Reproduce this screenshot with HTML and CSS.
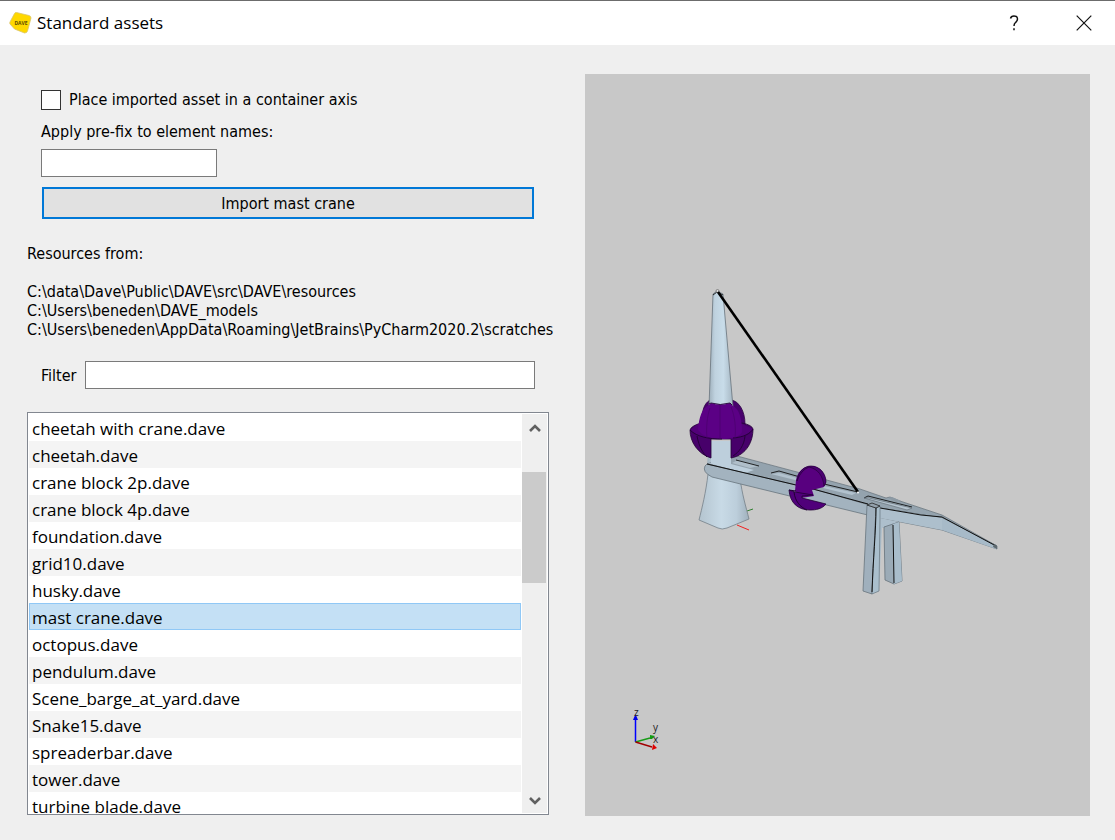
FILE: index.html
```html
<!DOCTYPE html>
<html lang="en">
<head>
<meta charset="utf-8">
<meta name="viewport" content="width=device-width, initial-scale=1">
<title>Standard assets</title>
<link rel="stylesheet" href="styles.css">
</head>
<body>
<div class="dialog">
  <header class="titlebar">
    <svg class="logo" viewBox="0 0 24 24" aria-hidden="true">
      <path d="M7.500 1.500 L20 4.500 Q22 5 22 7 L18.500 20 Q18 22 15.500 22 L5.500 18 L1 13 Q.5 12 1 11 L5.500 2.500 Q6 1.300 7.500 1.500Z" fill="#ffd800" stroke="#d9c46a" stroke-width=".8"/>
      <text x="12" y="13.500" class="logo-text">DAVE</text>
    </svg>
    <h1 class="title">Standard assets</h1>
    <button class="window-button" type="button" aria-label="Help">
      <svg class="window-icon" viewBox="0 0 16 16" aria-hidden="true"><path d="M4.500 3.500Q5 1 8 1Q11.500 1 11.500 4Q11.500 6 9.500 7.500Q8 8.700 8 11M8 13.300V15.300" fill="none" stroke="#111" stroke-width="1.500"/></svg>
    </button>
    <button class="window-button" type="button" aria-label="Close">
      <svg class="window-icon" viewBox="0 0 16 16" aria-hidden="true"><path d="M.7.7 15.300 15.300M15.300.7.7 15.300" stroke="#111" stroke-width="1.200"/></svg>
    </button>
  </header>
  <main class="content">
    <section class="controls">
      <form class="import-form">
        <label class="check-row"><input class="checkbox" type="checkbox">Place imported asset in a container axis</label>
        <label class="prefix-label" for="prefix">Apply pre-fix to element names:</label>
        <input class="field prefix" id="prefix" type="text">
        <button class="import-button" type="button">Import mast crane</button>
      </form>
      <div class="resources">
        <p class="resources-title">Resources from:</p>
        <p class="path">C:\data\Dave\Public\DAVE\src\DAVE\resources</p>
        <p class="path">C:\Users\beneden\DAVE_models</p>
        <p class="path">C:\Users\beneden\AppData\Roaming\JetBrains\PyCharm2020.2\scratches</p>
      </div>
      <div class="filter-row">
        <label for="filter">Filter</label>
        <input class="field filter" id="filter" type="text">
      </div>
      <div class="list-box">
        <ul class="list">
          <li class="item">cheetah with crane.dave</li>
          <li class="item">cheetah.dave</li>
          <li class="item">crane block 2p.dave</li>
          <li class="item">crane block 4p.dave</li>
          <li class="item">foundation.dave</li>
          <li class="item">grid10.dave</li>
          <li class="item">husky.dave</li>
          <li class="item selected">mast crane.dave</li>
          <li class="item">octopus.dave</li>
          <li class="item">pendulum.dave</li>
          <li class="item">Scene_barge_at_yard.dave</li>
          <li class="item">Snake15.dave</li>
          <li class="item">spreaderbar.dave</li>
          <li class="item">tower.dave</li>
          <li class="item">turbine blade.dave</li>
        </ul>
        <div class="scrollbar">
          <button class="scroll-button" type="button" aria-label="Scroll up"><svg class="chevron" viewBox="0 0 12 10" aria-hidden="true"><path d="M1 8 6 3 11 8" fill="none" stroke="#606060" stroke-width="2.600"/></svg></button>
          <div class="track"><div class="thumb"></div></div>
          <button class="scroll-button scroll-down" type="button" aria-label="Scroll down"><svg class="chevron" viewBox="0 0 12 10" aria-hidden="true"><path d="M1 2 6 7 11 2" fill="none" stroke="#606060" stroke-width="2.600"/></svg></button>
        </div>
      </div>
    </section>
    <section class="viewport" aria-label="Asset preview">
      <svg class="scene" viewBox="585 74 505 742" role="img" aria-label="Mast crane">
        <defs>
          <linearGradient id="mast" x1="0" x2="1" y1="0" y2="0">
            <stop offset="0" stop-color="#9fb0bc"/><stop offset=".25" stop-color="#bfd2df"/><stop offset=".6" stop-color="#c8dce9"/><stop offset="1" stop-color="#a5b6c2"/>
          </linearGradient>
          <linearGradient id="base" x1="0" x2="1" y1="0" y2="0">
            <stop offset="0" stop-color="#b4c4cf"/><stop offset=".45" stop-color="#c8dae6"/><stop offset=".75" stop-color="#bccedb"/><stop offset="1" stop-color="#a0b0bc"/>
          </linearGradient>
        </defs>
        <!-- mast base and ground axes -->
        <path d="M747 511 753 509" stroke="#308030"/>
        <path d="M737 525 749 530" stroke="#f02020"/>
        <path d="M708 474 C706 492 702 508 699 520 L718 528 Q722 530 727 528 L749 519 C746 507 742 494 740 478Z" fill="url(#base)" stroke="#758089" stroke-width=".8"/>
        <path d="M708 450H732L735 467H707Z" fill="url(#mast)"/>
        <!-- boom top face -->
        <path d="M707 464 L732 456 L737 456 L797 472 L860 489 L886 498 L890 497 L900 501 L942 515 L997 546 L942 518 L880 508 L813 490Z" fill="#94a3ae" stroke="#65717a" stroke-width=".7"/>
        <path d="M708 463H711V441H731V464L754 470 745 473Z" fill="#bdcfdc"/>
        <path d="M732 463 750 468 759 466 738 460Z" fill="#b0bfca"/>
        <path d="M736 460 759 466M771 473 779 471 800 477M824 484 858 492M864 498 868 496 912 507" stroke="#111" stroke-width=".9" fill="none"/>
        <path d="M771 474 779 473 801 479 799 481Z" fill="#b2c2ce"/>
        <path d="M824 486 856 493 852 495 823 488Z" fill="#b2c2ce"/>
        <path d="M864 498 869 498 912 508 907 510Z" fill="#b5c4cf" stroke="#68747d" stroke-width=".7"/>
        <path d="M888 498 892 497 901 501 896 502Z" fill="#8d9aa4"/>
        <!-- large purple sphere, rear -->
        <path d="M702 424 C702 409 704 404 710 400L713 409 704 427Z M731 400 C739 401 745 411 745 424L737 427 731 407Z" fill="#48006d" stroke="#2b0042" stroke-width=".8"/>
        <!-- mast -->
        <path d="M713 294 717 291 723 294 733 407H709Z" fill="url(#mast)" stroke="#68747c" stroke-width=".8"/>
        <path d="M713 295 717 292 723 295" fill="none" stroke="#222"/>
        <circle cx="717.500" cy="291" r="1.500" fill="#ddd" stroke="#666" stroke-width=".7"/>
        <!-- large purple sphere, front -->
        <path d="M690 430 Q691 426 701 423L742 423Q752 425 753 429C753 441 747 455 731 458V439H711V458C698 454 690 442 690 430Z" fill="#47006a" stroke="#210034" stroke-width=".8"/>
        <path d="M690 430C697 437 709 439 722 439S746 437 753 429L742 424H698Z" fill="#520079"/>
        <path d="M698 430 C699 417 702 408 709 405L711 403 Q720 406 730 403L733 406C739 409 742 418 742 432 C740 437 730 439 718 439 Q704 438 698 430Z" fill="#5b0085"/>
        <path d="M709 404 711 403Q720 406 730 403L732 405M697 436C699 447 703 453 707 457M745 436C744 446 739 452 733 456M690 430C697 437 709 439 722 439M733 438C744 437 750 434 753 429" fill="none" stroke="#210034" stroke-width=".9"/>
        <path d="M720 405V439M710 408C707 416 706 429 707 438M731 407C735 416 736 428 735 438" fill="none" stroke="#49006c" stroke-width=".7"/>
        <!-- boom front face -->
        <path d="M707 464 813 489 880 508 942 518 997 546V549L942 530 880 518 802 499 712 477 Q702 472 705 466Z" fill="#a3b3bf" stroke="#68757e" stroke-width=".8"/>
        <path d="M880 508 942 518V530L880 518Z" fill="#adbfcc"/>
        <path d="M942 518 996 546V549L942 530Z" fill="#a7bac8"/>
        <path d="M707 464 813 489 868 504M880 508 921 515 942 517 996 546" fill="none" stroke="#111" stroke-width="1"/>
        <path d="M994 544 997 546V549L993 547Z" fill="#5e696f"/>
        <!-- small purple sphere -->
        <path d="M796 480C798 470 805 466 811 466C821 466 826 474 826 483L824 487 812 490 814 496 801 498 795 491Z" fill="#58007f"/>
        <path d="M797 481C798 471 805 466 811 466C820 466 826 474 826 482L824 486C823 476 818 469 809 467Q801 470 797 481Z" fill="#4b0071" stroke="#25003a" stroke-width=".7"/>
        <path d="M789 490 795 492 813 495 802 496 802 498 826 504C822 509 816 510 810 510C798 510 790 503 789 490Z" fill="#50007a" stroke="#210034" stroke-width=".8"/>
        <path d="M794 492C795 501 800 507 807 510M789 490 796 491" stroke="#210034" fill="none"/>
        <!-- legs -->
        <path d="M880 518 899 522 898 525 882 528 879 591 872 594Z" fill="#adbfcc"/>
        <path d="M884 527 893 524 899 522 902 581 894 584 885 580Z" fill="#9babb7" stroke="#66727b" stroke-width=".8"/>
        <path d="M893 524 899 522 902 581 894 584Z" fill="#a9bdcb"/>
        <path d="M867 505 876 508 872 594 863 591Z" fill="#a0b0bd" stroke="#68757e" stroke-width=".8"/>
        <path d="M876 508 880 506V518L879 591 872 594Z" fill="#aabfcd" stroke="#68757e" stroke-width=".7"/>
        <path d="M867 505 872 503 880 506 876 508Z" fill="#93a1ac" stroke="#222" stroke-width=".8"/>
        <path d="M876 508C876 530 873 560 872 592M893 525 894 583" fill="none" stroke="#111" stroke-width="1"/>
        <path d="M718 292 858 492" stroke="#000" stroke-width="2.600"/>
        <circle cx="858" cy="492.500" r="1" fill="#fff"/>
        <!-- orientation axes -->
        <path d="M635.500 742V719" stroke="#0000ff" stroke-width="1.500"/><path d="M633 720 635.500 714 638 720Z" fill="#0000e8"/>
        <path d="M635.500 742 650 738" stroke="#169b16" stroke-width="1.400"/><path d="M650 735 655 736 652 739 650 739Z" fill="#129a12"/>
        <path d="M635.500 742 652 747" stroke="#a00000" stroke-width="1.400"/><path d="M653 744 657 748 652 750Z" fill="#e00000"/>
        <text class="axis" x="634" y="716">z</text>
        <text class="axis" x="653" y="731">y</text>
        <text class="axis" x="653" y="743">x</text>
      </svg>
    </section>
  </main>
</div>
</body>
</html>
```
FILE: styles.css
```css
* { box-sizing: border-box; }
body {
  margin: 0;
  background: #efefef;
  color: #000;
  font: 16px/19px "DejaVu Sans Condensed", "Noto Sans", sans-serif;
}
p, h1, ul { margin: 0; padding: 0; }
button { padding: 0; font: inherit; color: inherit; }
.dialog { display: flex; flex-direction: column; height: 100vh; min-height: 640px; }
.titlebar {
  display: flex;
  align-items: center;
  height: 45px;
  padding-left: 9px;
  border-top: 1px solid #6c6c6c;
  background: #fff;
}
.logo { width: 24px; height: 24px; margin-right: 4px; }
.logo-text { font: bold 5px "Open Sans", sans-serif; text-anchor: middle; fill: #5b4b00; }
.title { flex: 1; font: 17px/24px "Open Sans", sans-serif; }
.window-button {
  display: grid;
  place-items: center;
  width: 78px;
  height: 44px;
  border: 0;
  background: transparent;
}
.window-button:last-child { width: 62px; }
.window-icon { width: 16px; height: 16px; }
.content {
  flex: 1;
  display: grid;
  grid-template-columns: 522fr 505fr;
  gap: 36px;
  min-height: 0;
  padding: 29px 25px 24px 27px;
}
.controls { display: flex; flex-direction: column; min-width: 0; min-height: 0; padding: 16px 0 1px; }
.import-form { display: flex; flex-direction: column; padding: 0 15px 0 14px; }
.check-row { display: flex; align-items: center; gap: 8px; height: 20px; line-height: 20px; }
.checkbox { appearance: none; width: 20px; height: 20px; margin: 0; border: 1px solid #333; background: #fff; }
.prefix-label { margin: 12px 0 8px; }
.field { height: 28px; padding: 0 4px; border: 1px solid #7a7a7a; background: #fff; font: inherit; }
.prefix { width: 176px; }
.import-button { height: 32px; margin: 10px 0 0 1px; padding-top: 1px; border: 2px solid #0078d7; background: #e1e1e1; }
.resources { margin-top: 25px; white-space: nowrap; }
.resources-title { margin-bottom: 19px; }
.filter-row { display: flex; align-items: center; gap: 8px; margin: 22px 14px 23px; }
.filter { flex: 1; min-width: 0; }
.list-box {
  flex: 1;
  display: flex;
  min-height: 0;
  padding: 1px 1px 1px 1px;
  border: 1px solid #828790;
  background: #fff;
}
.list { flex: 1; overflow: hidden; list-style: none; font: 17px/29px "Open Sans", sans-serif; }
.item { height: 27px; padding-left: 3px; }
.item:nth-child(even) { background: #f4f4f4; }
.item.selected { background: #c4e0f5; box-shadow: inset 0 0 0 1px #90c8f6; }
.scrollbar { display: flex; flex-direction: column; width: 25px; margin-left: 1px; background: #efefef; }
.scroll-button { display: grid; place-items: center; height: 28px; border: 0; background: transparent; }
.scroll-down { height: 24px; }
.chevron { width: 12px; height: 10px; }
.track { flex: 1; padding-top: 30px; }
.thumb { width: 24px; height: 35%; background: #cbcbcb; }
.viewport { min-width: 0; min-height: 0; background: #c8c8c8; }
.scene { display: block; width: 100%; height: 100%; }
.axis { font: 10px "Open Sans", sans-serif; fill: #222; }
```
